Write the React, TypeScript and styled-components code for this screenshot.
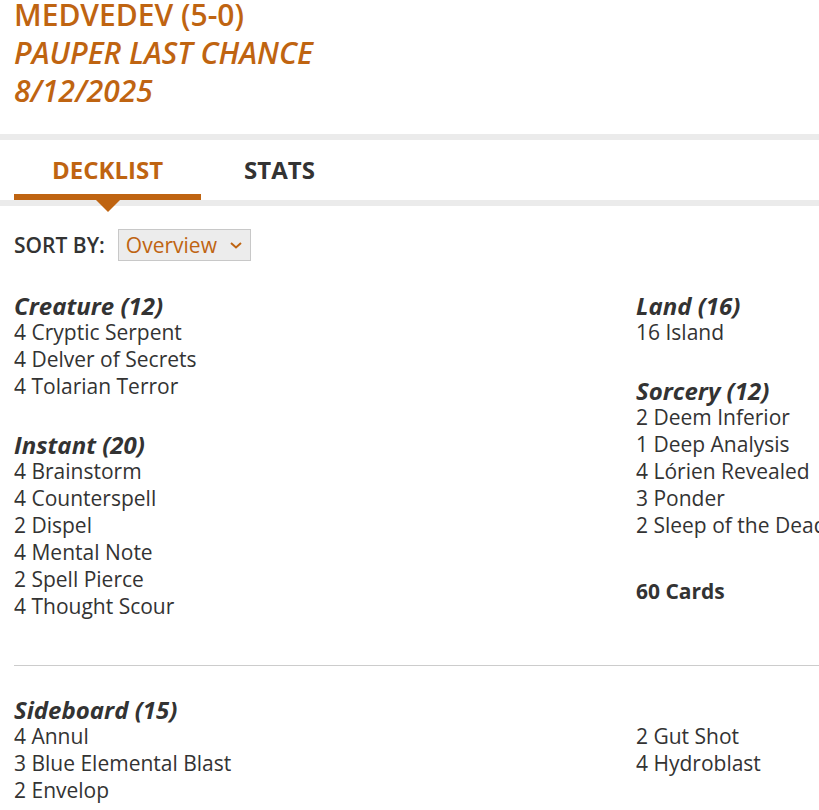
import React from "react";
import styled, { createGlobalStyle } from "styled-components";

const orange = "#bf6411";
const ink = "#333333";

const GlobalStyle = createGlobalStyle`
  html, body {
    margin: 0;
    padding: 0;
    overflow: hidden;
    background: #ffffff;
  }
  body {
    font-family: "Open Sans", "Noto Sans", sans-serif;
    color: ${ink};
  }
`;

const Page = styled.div`
  width: 1300px;
`;

const TitleBlock = styled.header`
  margin-top: -4px;
  padding: 0 14px 24px;
  color: ${orange};
  font-size: 30px;
  line-height: 38px;
  font-weight: 600;
`;

const TitleLine = styled.div<{ $italic?: boolean }>`
  font-style: ${(p) => (p.$italic ? "italic" : "normal")};
`;

const Band = styled.div`
  height: 6px;
  background: #ebebeb;
`;

const Tabs = styled.nav`
  display: flex;
  gap: 5px;
  padding: 0 14px;
`;

const Tab = styled.div<{ $active?: boolean }>`
  position: relative;
  padding: 14px 38px 8px;
  font-size: 24px;
  line-height: 32px;
  font-weight: 700;
  color: ${(p) => (p.$active ? orange : ink)};
  border-bottom: 6px solid ${(p) => (p.$active ? orange : "transparent")};

  ${(p) =>
    p.$active &&
    `
    &::after {
      content: "";
      position: absolute;
      left: 50%;
      bottom: -18px;
      margin-left: -12px;
      border-left: 12px solid transparent;
      border-right: 12px solid transparent;
      border-top: 12px solid ${orange};
    }
  `}
`;

const SortRow = styled.div`
  display: flex;
  align-items: center;
  gap: 13px;
  padding: 23px 14px 0;
`;

const SortLabel = styled.span`
  font-size: 21px;
  font-weight: 600;
  text-transform: uppercase;
`;

const Select = styled.div`
  display: flex;
  align-items: center;
  gap: 12px;
  height: 30px;
  padding: 0 7px;
  background: #ececec;
  border: 1px solid #c8c8c8;
  color: ${orange};
  font-size: 21px;
`;

const Deck = styled.div`
  display: grid;
  grid-template-columns: 622px 622px;
  padding: 31px 14px 0;
`;

const Column = styled.div`
  display: flex;
  flex-direction: column;
  gap: 31px;
`;

const Group = styled.section``;

const GroupTitle = styled.h3`
  margin: 0;
  font-size: 24px;
  line-height: 27px;
  font-weight: 700;
  font-style: italic;
`;

const CardLine = styled.div`
  font-size: 21px;
  line-height: 27px;
  white-space: nowrap;
`;

const Total = styled.div`
  margin-top: 8px;
  font-size: 21px;
  line-height: 27px;
  font-weight: 700;
`;

const Divider = styled.hr`
  margin: 45px 0 0 14px;
  border: none;
  border-top: 1px solid #cccccc;
`;

const Sideboard = styled.div`
  padding: 30px 14px 0;
`;

const SideColumns = styled.div`
  display: grid;
  grid-template-columns: 622px 622px;
`;

type CardGroup = { title: string; cards: string[] };

const left: CardGroup[] = [
  {
    title: "Creature (12)",
    cards: ["4 Cryptic Serpent", "4 Delver of Secrets", "4 Tolarian Terror"],
  },
  {
    title: "Instant (20)",
    cards: [
      "4 Brainstorm",
      "4 Counterspell",
      "2 Dispel",
      "4 Mental Note",
      "2 Spell Pierce",
      "4 Thought Scour",
    ],
  },
];

const right: CardGroup[] = [
  { title: "Land (16)", cards: ["16 Island"] },
  {
    title: "Sorcery (12)",
    cards: [
      "2 Deem Inferior",
      "1 Deep Analysis",
      "4 Lórien Revealed",
      "3 Ponder",
      "2 Sleep of the Dead",
    ],
  },
];

const sideLeft = ["4 Annul", "3 Blue Elemental Blast", "2 Envelop"];
const sideRight = ["2 Gut Shot", "4 Hydroblast"];

const Chevron = () => (
  <svg width="14" height="10" viewBox="0 0 14 10" fill="none">
    <path d="M2 3l5 4.5L12 3" stroke={orange} strokeWidth="2" />
  </svg>
);

const GroupView = ({ group }: { group: CardGroup }) => (
  <Group>
    <GroupTitle>{group.title}</GroupTitle>
    {group.cards.map((c) => (
      <CardLine key={c}>{c}</CardLine>
    ))}
  </Group>
);

export default function App() {
  return (
    <Page>
      <GlobalStyle />
      <TitleBlock>
        <TitleLine>MEDVEDEV (5-0)</TitleLine>
        <TitleLine $italic>PAUPER LAST CHANCE</TitleLine>
        <TitleLine $italic>8/12/2025</TitleLine>
      </TitleBlock>
      <Band />
      <Tabs>
        <Tab $active>DECKLIST</Tab>
        <Tab>STATS</Tab>
      </Tabs>
      <Band />
      <SortRow>
        <SortLabel>Sort by:</SortLabel>
        <Select>
          Overview
          <Chevron />
        </Select>
      </SortRow>
      <Deck>
        <Column>
          {left.map((g) => (
            <GroupView key={g.title} group={g} />
          ))}
        </Column>
        <Column>
          {right.map((g) => (
            <GroupView key={g.title} group={g} />
          ))}
          <Total>60 Cards</Total>
        </Column>
      </Deck>
      <Divider />
      <Sideboard>
        <GroupTitle>Sideboard (15)</GroupTitle>
        <SideColumns>
          <div>
            {sideLeft.map((c) => (
              <CardLine key={c}>{c}</CardLine>
            ))}
          </div>
          <div>
            {sideRight.map((c) => (
              <CardLine key={c}>{c}</CardLine>
            ))}
          </div>
        </SideColumns>
      </Sideboard>
    </Page>
  );
}
